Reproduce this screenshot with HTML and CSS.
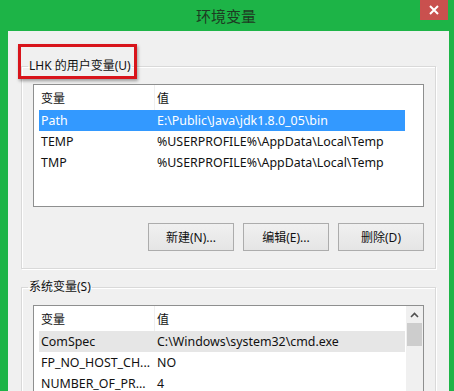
FILE: index.html
```html
<!DOCTYPE html>
<html lang="zh-CN">
<head>
<meta charset="utf-8">
<title>环境变量</title>
<link rel="stylesheet" href="styles.css">
</head>
<body>
<div class="window">
  <div class="titlebar">
    <span class="spacer"></span>
    <span class="title">环境变量</span>
    <span class="close"><svg width="12" height="10" viewBox="0 0 12 10"><path d="M2 1 L10 9 M10 1 L2 9" stroke="#fff" stroke-width="2" fill="none"/></svg></span>
  </div>
  <div class="content">
    <fieldset class="group">
      <legend class="legend"><span class="mark"></span>LHK 的用户变量(U)</legend>
      <div class="group-body">
        <div class="list list-user">
          <div class="list-main">
            <div class="row head"><span class="c1">变量</span><span class="c2">值</span></div>
            <div class="row sel"><span class="c1">Path</span><span class="c2">E:\Public\Java\jdk1.8.0_05\bin</span></div>
            <div class="row"><span class="c1">TEMP</span><span class="c2">%USERPROFILE%\AppData\Local\Temp</span></div>
            <div class="row"><span class="c1">TMP</span><span class="c2">%USERPROFILE%\AppData\Local\Temp</span></div>
          </div>
        </div>
        <div class="buttons">
          <button class="btn">新建(N)...</button>
          <button class="btn">编辑(E)...</button>
          <button class="btn">删除(D)</button>
        </div>
      </div>
    </fieldset>
    <fieldset class="group group-sys">
      <legend class="legend">系统变量(S)</legend>
      <div class="group-body">
        <div class="list list-sys">
          <div class="list-main">
            <div class="row head"><span class="c1">变量</span><span class="c2">值</span></div>
            <div class="row inactive"><span class="c1">ComSpec</span><span class="c2">C:\Windows\system32\cmd.exe</span></div>
            <div class="row"><span class="c1">FP_NO_HOST_CH...</span><span class="c2">NO</span></div>
            <div class="row"><span class="c1">NUMBER_OF_PR...</span><span class="c2">4</span></div>
          </div>
          <div class="scrollbar">
            <span class="arrow"><svg width="9" height="6" viewBox="0 0 9 6"><path d="M1 5 L4.5 1.5 L8 5" stroke="#505050" stroke-width="1.6" fill="none"/></svg></span>
            <span class="thumb"></span>
          </div>
        </div>
      </div>
    </fieldset>
  </div>
</div>
</body>
</html>
```

FILE: styles.css
```css
* { box-sizing: border-box; }
html, body { margin: 0; padding: 0; }
body {
  width: 454px;
  height: 391px;
  overflow: hidden;
  background: #1db447;
  font-family: "Noto Sans", "Noto Sans CJK SC", sans-serif;
  font-size: 12px;
  color: #111;
}
.window {
  display: flex;
  flex-direction: column;
  height: 391px;
}
.titlebar {
  height: 31px;
  flex: none;
  display: grid;
  grid-template-columns: 1fr auto 1fr;
  padding-right: 6px;
}
.title {
  font-family: "Noto Sans CJK SC", sans-serif;
  font-size: 15px;
  line-height: 31px;
  color: #1d3a22;
  padding-left: 4px;
}
.close {
  justify-self: end;
  align-self: start;
  width: 28px;
  height: 20px;
  background: #c9504e;
  display: flex;
  align-items: center;
  justify-content: center;
}
.content {
  flex: 1;
  margin: 0 5px 0 8px;
  background: #f0f0f0;
  padding: 27px 13px 0;
}
.group {
  position: relative;
  margin: 0;
  padding: 0;
  min-width: 0;
  border: 1px solid #d9d9d9;
  box-shadow: inset 1px 1px 0 #fff, 1px 1px 0 #fff;
}
.group-sys { margin-top: 10px; }
.legend {
  position: relative;
  margin-left: 6px;
  padding: 0 1px;
  line-height: 16px;
  font-size: 12px;
}
.mark {
  position: absolute;
  left: -10px;
  top: -14px;
  width: 119px;
  height: 35px;
  border: 3px solid #d8141b;
  box-shadow: 1px 2px 3px rgba(0,0,0,0.35);
}
.group-body {
  padding: 10px 11px 17px;
}
.list {
  display: flex;
  background: #fff;
  border: 1px solid #8e8f8f;
}
.list-user { height: 123px; }
.list-sys { height: 140px; }
.list-main {
  flex: 1;
  display: flex;
  flex-direction: column;
}
.row {
  display: flex;
  flex: none;
  height: 21px;
  margin-left: 5px;
  width: 366px;
  align-items: center;
  white-space: nowrap;
  font-size: 12.4px;
}
.row.head {
  height: 25px;
  margin-left: 0;
  padding-left: 5px;
  width: auto;
  align-self: stretch;
  font-size: 12px;
}
.c1 {
  width: 116px;
  padding-left: 2px;
  overflow: hidden;
}
.c2 {
  flex: 1;
  padding-left: 2px;
}
.head .c1 { border-right: 1px solid #efefef; height: 100%; display: flex; align-items: center; }
.sel { background: #3399ff; color: #fff; }
.inactive { background: #e6e6e6; }
.buttons {
  display: flex;
  justify-content: flex-end;
  gap: 9px;
  margin-top: 16px;
}
.btn {
  width: 86px;
  height: 28px;
  border: 1px solid #acacac;
  background: linear-gradient(#f0f0f0, #e5e5e5);
  font-family: "Noto Sans", "Noto Sans CJK SC", sans-serif;
  font-size: 12px;
  color: #111;
  padding: 0;
}
.scrollbar {
  width: 17px;
  background: #f0f0f0;
  display: flex;
  flex-direction: column;
  align-items: center;
}
.arrow {
  height: 17px;
  display: flex;
  align-items: center;
  justify-content: center;
}
.thumb {
  width: 15px;
  height: 23px;
  background: #cdcdcd;
}
```
